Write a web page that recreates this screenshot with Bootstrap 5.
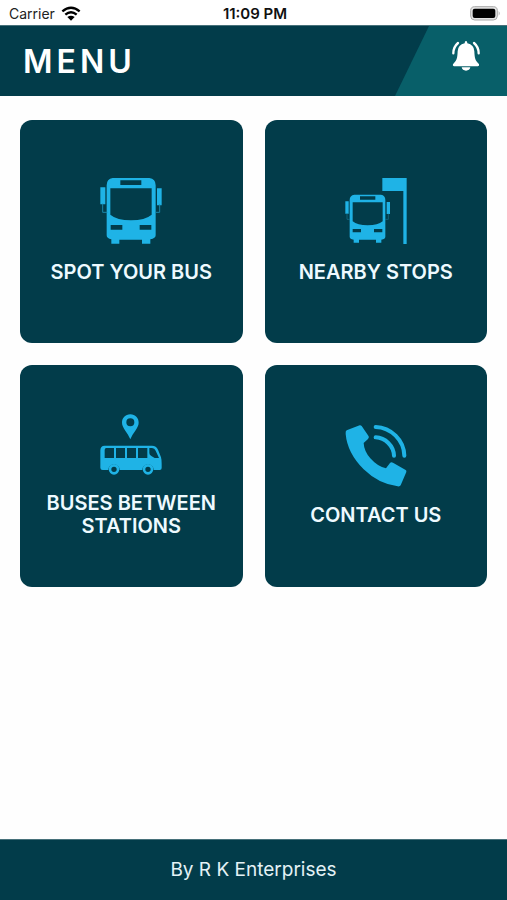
<!DOCTYPE html>
<html lang="en">
<head>
<meta charset="utf-8">
<meta name="viewport" content="width=device-width, initial-scale=1">
<title>Menu</title>
<link href="https://cdn.jsdelivr.net/npm/bootstrap@5.3.0/dist/css/bootstrap.min.css" rel="stylesheet">
<style>
:root { --deep: #023c4a; --teal: #085f69; --sky: #1fb3e6; }
body { font-family: Inter, "Liberation Sans", sans-serif; background: #fefefe; }
.status-bar { height: 25px; padding: 2px 6px 0 9px; font-size: 14px; line-height: 24px; color: #222; background: #fff; }
.status-bar > * { flex: 1 1 0; }
.status-carrier { gap: 6px; }
.status-time { font-size: 15px; font-weight: 600; color: #111; }
.app-bar { height: 71px; background: var(--deep); border-top: 1px solid #47717a; }
.app-title { font-size: 32px; line-height: 40px; font-weight: 600; letter-spacing: 4px; padding: 2px 0 0 23px; }
.alert-panel { width: 112px; padding: 0 27px 10px 0; background: var(--teal); clip-path: polygon(34px 0, 100% 0, 100% 100%, 0 100%); }
.menu-grid { display: grid; grid-template-columns: 1fr 1fr; gap: 22px; padding: 24px 20px; }
.tile { aspect-ratio: 1; gap: 17px; border-radius: 12px; background: var(--deep); color: #eefaff; font-size: 20px; font-weight: 600; line-height: 23px; }
.tile:hover, .tile:focus-visible { background: var(--teal); color: #fff; }
.tile svg { fill: var(--sky); }
.app-footer { height: 61px; background: var(--deep); border-top: 1px solid #47717a; color: #e4f2f6; font-size: 19px; }
</style>
</head>
<body class="d-flex flex-column min-vh-100">
<div class="status-bar d-flex align-items-center">
  <div class="status-carrier d-flex align-items-center">
    <span>Carrier</span>
    <svg width="20" height="15" viewBox="0 0 60 45" fill="none" stroke="#000" stroke-width="7" aria-hidden="true">
      <path d="M4 16Q30-6 56 16M13 26Q30 11 47 26"/><path d="M19 33Q30 25 41 33L30 44Z" fill="#000" stroke="none"/>
    </svg>
  </div>
  <div class="status-time text-center">11:09 PM</div>
  <div class="d-flex justify-content-end">
    <svg width="31" height="15" viewBox="0 0 93 45" aria-hidden="true">
      <rect x="2" y="2" width="80" height="40" rx="12" fill="#e3e3e3" stroke="#aaa" stroke-width="3"/>
      <rect x="8" y="8" width="68" height="28" rx="6" fill="#000"/><path d="M86 15q6 7 0 14z" fill="#aaa"/>
    </svg>
  </div>
</div>
<header class="app-bar d-flex align-items-stretch justify-content-between">
  <h1 class="app-title text-white mb-0 align-self-center">MENU</h1>
  <div class="alert-panel d-flex align-items-center justify-content-end">
    <button type="button" class="btn p-0 border-0 lh-1" aria-label="Notifications">
      <svg width="28" height="30" viewBox="0 0 84 90" fill="#fff" aria-hidden="true">
        <path d="M42 0q4 0 4 7 20 4 21 24c1 22 3 27 11 35 6 6 3 10-2 10H8c-5 0-8-4-2-10 8-8 10-13 11-35Q18 11 38 7q0-7 4-7Z"/>
        <path d="M29 79h26q-2 10-13 10t-13-10Z"/>
        <path d="M18 6Q4 18 4 37M66 6q14 12 14 31" fill="none" stroke="#fff" stroke-width="7" stroke-linecap="round"/>
      </svg>
    </button>
  </div>
</header>
<main class="menu-grid">
  <button type="button" class="tile btn border-0 p-2 d-flex flex-column align-items-center justify-content-center">
    <svg width="62" height="66" viewBox="47 41 186 198" aria-hidden="true">
      <path fill-rule="evenodd" d="M85 41H195Q214 43 214 63V213Q214 222 198 225V238H173V226H105V238H81V225Q67 222 67 213V63Q67 43 85 41ZM108 48V62H171V48ZM78 72V151Q98 168 140 168T202 151V72ZM79 182V196H114V182ZM166 182V196H201V182Z"/>
      <path d="M48 69H63V120H48ZM218 72H232V123H218Z"/>
      <path d="M55 118V144H69M226 120V144H212" fill="none" stroke="#1a86a9" stroke-width="3"/>
    </svg>
    <span>SPOT YOUR BUS</span>
  </button>
  <button type="button" class="tile btn border-0 p-2 d-flex flex-column align-items-center justify-content-center">
    <svg width="62" height="66" viewBox="46 42 186 198" aria-hidden="true">
      <path d="M158 42H231V240H221V81H158Z"/>
      <path fill-rule="evenodd" d="M74 92H154Q167 94 167 108V218Q167 225 155 227V236H139V227H88V236H72V227Q60 225 60 218V108Q60 94 74 92ZM91 97V107H137V97ZM69 115V172Q83 184 114 184T159 172V115ZM69 195V205H94V195ZM133 195V205H158V195Z"/>
      <path d="M47 112H57V149H47ZM171 114H181V150H171Z"/>
      <path d="M52 148V166H61M176 149V166H166" fill="none" stroke="#1a7693" stroke-width="2"/>
    </svg>
    <span>NEARBY STOPS</span>
  </button>
  <button type="button" class="tile btn border-0 p-2 d-flex flex-column align-items-center justify-content-center">
    <svg width="62" height="61" viewBox="47 27 186 183" aria-hidden="true">
      <path fill-rule="evenodd" d="M138 28C123 28 113 39 113 53C113 69 130 82 138 103C146 82 163 69 163 53C163 39 153 28 138 28ZM138 40A12 12 0 1 1 138 64A12 12 0 1 1 138 40Z"/>
      <path fill-rule="evenodd" d="M61 122H203Q216 122 221 134L230 157Q232 164 232 176V189Q232 195 226 195H208A17 17 0 0 0 174 195H106A17 17 0 0 0 72 195H55Q48 195 48 188V136Q48 122 61 122ZM66 129Q61 129 61 135V159H89V129ZM95 129V159H122V129ZM128 129V159H155V129ZM161 129V159H189V129ZM195 129V144Q195 150 201 153L211 159H224L214 137Q211 129 203 129Z"/>
      <path fill-rule="evenodd" d="M89 177A16 16 0 1 1 89 209A16 16 0 1 1 89 177ZM89 185A8 8 0 1 0 89 201A8 8 0 1 0 89 185ZM191 177A16 16 0 1 1 191 209A16 16 0 1 1 191 177ZM191 185A8 8 0 1 0 191 201A8 8 0 1 0 191 185Z"/>
    </svg>
    <span>BUSES BETWEEN<br>STATIONS</span>
  </button>
  <button type="button" class="tile btn border-0 p-2 d-flex flex-column align-items-center justify-content-center">
    <svg width="62" height="62" viewBox="46 46 186 186" aria-hidden="true">
      <path d="M51 62L90 47Q93 46 96 49L117 80Q119 84 115 88L102 100Q103 124 122 146Q144 171 169 176L181 160Q184 156 190 159L228 181Q231 183 230 187L213 227Q211 231 204 230Q147 223 102 179Q53 130 48 73Q47 64 51 62Z"/>
      <path d="M138 52C184 53 223 92 224 138M138 83C167 84 192 109 193 138" fill="none" stroke="#1fb3e6" stroke-width="12" stroke-linecap="round"/>
    </svg>
    <span>CONTACT US</span>
  </button>
</main>
<footer class="app-footer mt-auto d-flex align-items-center justify-content-center">By R K Enterprises</footer>
<script src="https://cdn.jsdelivr.net/npm/bootstrap@5.3.0/dist/js/bootstrap.bundle.min.js"></script>
</body>
</html>
